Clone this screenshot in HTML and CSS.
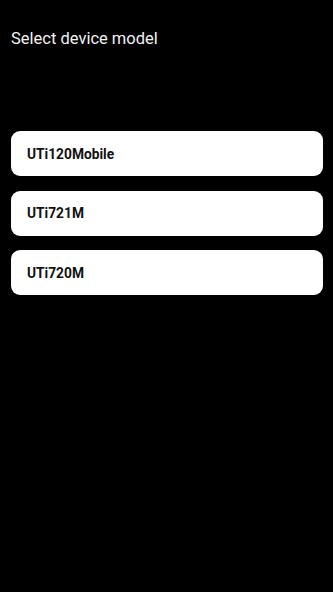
FILE: index.html
```html
<!DOCTYPE html>
<html>
<head>
<meta charset="utf-8">
<link rel="stylesheet" href="styles.css">
</head>
<body>
<div class="screen">
  <h1 class="title">Select device model</h1>
  <div class="list">
    <div class="card">UTi120Mobile</div>
    <div class="card">UTi721M</div>
    <div class="card">UTi720M</div>
  </div>
</div>
</body>
</html>
```
FILE: styles.css
```css
html, body {
  margin: 0;
  padding: 0;
  background: #000;
}
.screen {
  width: 333px;
  height: 592px;
  background: #000;
  font-family: Roboto, "Liberation Sans", sans-serif;
  padding: 29px 10px 0 11px;
  box-sizing: border-box;
}
.title {
  margin: 0;
  color: #f2f2f2;
  font-size: 16.5px;
  font-weight: 400;
  line-height: 20px;
}
.list {
  margin-top: 82px;
  display: flex;
  flex-direction: column;
  gap: 14.5px;
}
.card {
  background: #fff;
  border-radius: 9px;
  height: 45px;
  display: flex;
  align-items: center;
  padding-left: 16px;
  color: #111;
  font-size: 13.75px;
  font-weight: 700;
}
```
